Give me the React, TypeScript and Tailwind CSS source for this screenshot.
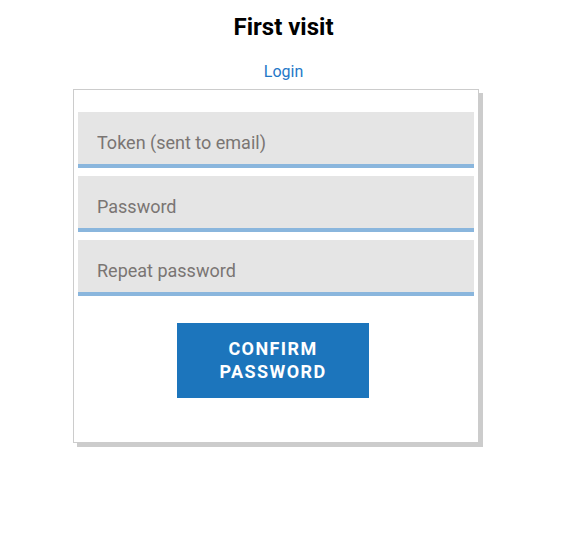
import React from 'react';

const fields = ['Token (sent to email)', 'Password', 'Repeat password'];

const App = () => {
  return (
    <div className="min-h-[559px] w-[562px] bg-white" style={{ fontFamily: 'Roboto, "Liberation Sans", sans-serif' }}>
      <div className="pl-[5px] pt-[12px] text-center">
        <h1 className="text-[24px] font-bold leading-[30px] text-black">First visit</h1>
        <a href="#" className="mt-[20px] block text-[16px] leading-[20px] text-[#1f78c8]">
          Login
        </a>
      </div>
      <div className="ml-[73px] mt-[7px] w-[406px] border border-[#cccccc] bg-white px-[4px] pt-[22px] pb-[44px] shadow-[4px_4px_0_#cccccc]">
        <div className="flex flex-col gap-[8px]">
          {fields.map((f) => (
            <input
              key={f}
              type={f === 'Token (sent to email)' ? 'text' : 'password'}
              placeholder={f}
              className="h-[56px] w-full border-b-4 border-[#8ab6dd] bg-[#e5e5e5] px-[19px] pt-[8px] text-[18px] text-[#333] outline-none placeholder:text-[#7a7573]"
            />
          ))}
        </div>
        <div className="mt-[27px] flex justify-center pr-[6px]">
          <button className="h-[75px] w-[192px] bg-[#1c75bc] pb-[2px] text-[18px] font-bold uppercase leading-[23px] tracking-[1.4px] text-white">
            Confirm
            <br />
            Password
          </button>
        </div>
      </div>
    </div>
  );
};

export default App;
